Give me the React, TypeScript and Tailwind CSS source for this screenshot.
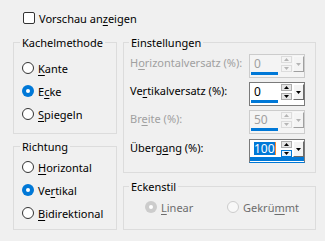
import React from "react";

const Up = ({ c }: { c: string }) => (
  <svg width="5" height="3" viewBox="0 0 5 3" className="block">
    <polygon points="0,3 5,3 2.5,0" fill={c} />
  </svg>
);
const Down = ({ c }: { c: string }) => (
  <svg width="5" height="3" viewBox="0 0 5 3" className="block">
    <polygon points="0,0 5,0 2.5,3" fill={c} />
  </svg>
);

function Radio({
  checked,
  disabled,
  children,
}: {
  checked?: boolean;
  disabled?: boolean;
  children: React.ReactNode;
}) {
  let circle;
  if (checked && !disabled) {
    circle = (
      <span className="w-[12px] h-[12px] rounded-full bg-[#0078d7] flex items-center justify-center shrink-0">
        <span className="w-[4px] h-[4px] rounded-full bg-white" />
      </span>
    );
  } else if (checked && disabled) {
    circle = (
      <span className="w-[12px] h-[12px] rounded-full bg-[#cccccc] flex items-center justify-center shrink-0">
        <span className="w-[4px] h-[4px] rounded-full bg-white" />
      </span>
    );
  } else if (disabled) {
    circle = (
      <span className="w-[12px] h-[12px] rounded-full border border-[#cccccc] bg-[#f8f8f8] shrink-0" />
    );
  } else {
    circle = (
      <span className="w-[12px] h-[12px] rounded-full border border-[#333333] bg-white shrink-0" />
    );
  }
  return (
    <div className="flex items-center h-[12px] gap-[4px]">
      {circle}
      <span
        className={
          disabled
            ? "text-[#6d6d6d] leading-[15px] whitespace-nowrap"
            : "text-black leading-[15px] whitespace-nowrap"
        }
      >
        {children}
      </span>
    </div>
  );
}

const U = ({ children }: { children: React.ReactNode }) => (
  <span className="underline underline-offset-[2px] decoration-[1px]">{children}</span>
);

function Spin({
  value,
  disabled,
  focused,
}: {
  value: string;
  disabled?: boolean;
  focused?: boolean;
}) {
  const arrow = disabled ? "#b5b5b5" : "#000000";
  return (
    <div
      className={
        disabled
          ? "w-[56px] h-[24px] border border-[#cccccc] bg-[#f4f4f4] flex flex-col shrink-0"
          : focused
          ? "w-[56px] h-[24px] border border-[#7a7a7a] border-b-[#0078d7] bg-white flex flex-col shrink-0"
          : "w-[56px] h-[24px] border border-[#7a7a7a] bg-white flex flex-col shrink-0"
      }
    >
      <div className="flex h-[17px]">
        <div className="w-[30px] pl-[4px] flex items-center text-[12px]">
          {focused ? (
            <span className="flex items-center h-[13px] mt-[-1px]">
              <span className="bg-[#0078d7] text-white leading-[13px] h-[13px]">{value}</span>
              <span className="w-[1px] h-[13px] bg-[#ff8728]" />
            </span>
          ) : (
            <span
              className={
                disabled ? "text-[#a0a0a0] leading-[15px]" : "text-black leading-[15px]"
              }
            >
              {value}
            </span>
          )}
        </div>
        <div className="w-[1px]" />
        <div className="w-[11px] flex flex-col pt-[1px] gap-[2px]">
          <div
            className={
              disabled
                ? "h-[7px] border border-[#dcdcdc] bg-[#f4f4f4] flex items-center justify-center"
                : "h-[7px] border border-[#adadad] bg-[#e5e5e5] flex items-center justify-center"
            }
          >
            <Up c={arrow} />
          </div>
          <div
            className={
              disabled
                ? "h-[7px] border border-[#dcdcdc] bg-[#f4f4f4] flex items-center justify-center"
                : focused
                ? "h-[7px] border border-[#0078d7] bg-[#e5f1fb] flex items-center justify-center"
                : "h-[7px] border border-[#adadad] bg-[#e5e5e5] flex items-center justify-center"
            }
          >
            <Down c={arrow} />
          </div>
        </div>
        <div className="w-[1px]" />
        <div
          className={
            disabled
              ? "w-[11px] mt-[1px] h-[16px] border border-[#f8f8f8] border-r-[#a0a0a0] border-b-[#a0a0a0] bg-[#f4f4f4] flex items-center justify-center"
              : "w-[11px] mt-[1px] h-[16px] border border-white border-r-[#696969] border-b-[#696969] bg-[#f4f4f4] flex items-center justify-center"
          }
        >
          <Down c={arrow} />
        </div>
      </div>
      {focused ? (
        <div className="h-[4px] bg-[#0078d7]" />
      ) : (
        <div className="ml-[1px] w-[27px] h-[3px] bg-[#0078d7]" />
      )}
    </div>
  );
}

function Row({
  label,
  disabled,
  mt,
  children,
}: {
  label: React.ReactNode;
  disabled?: boolean;
  mt: string;
  children: React.ReactNode;
}) {
  return (
    <div className={`flex justify-between items-start h-[24px] ${mt}`}>
      <span
        className={
          disabled
            ? "text-[#a0a0a0] leading-[15px] mt-[1px] whitespace-nowrap"
            : "text-black leading-[15px] mt-[1px] whitespace-nowrap"
        }
      >
        {label}
      </span>
      {children}
    </div>
  );
}

export default function App() {
  return (
    <div className="w-[325px] h-[241px] bg-[#f0f0f0] overflow-hidden text-[11px] text-black font-['Noto_Sans',sans-serif]">
      <div className="flex items-center gap-[4px] mt-[12px] ml-[23px] h-[12px]">
        <span className="w-[12px] h-[12px] rounded-[2px] border border-[#333333] bg-white shrink-0" />
        <span className="leading-[15px]">
          Vorschau an<U>z</U>eigen
        </span>
      </div>
      <div className="flex gap-[6px] ml-[13px] mt-[11px]">
        <div className="flex flex-col gap-[5px] w-[104px]">
          <fieldset className="border border-[#dcdcdc] h-[99px] p-0 m-0 min-w-0">
            <legend className="ml-[6px] px-[2px] leading-[15px]">Kachelmethode</legend>
            <div className="flex flex-col gap-[11px] pl-[8px] mt-[12px]">
              <Radio>
                <U>K</U>ante
              </Radio>
              <Radio checked>
                E<U>c</U>ke
              </Radio>
              <Radio>
                <U>S</U>piegeln
              </Radio>
            </div>
          </fieldset>
          <fieldset className="border border-[#dcdcdc] h-[91px] p-0 m-0 min-w-0">
            <legend className="ml-[6px] px-[2px] leading-[15px]">Richtung</legend>
            <div className="flex flex-col gap-[11px] pl-[8px] mt-[7px]">
              <Radio>
                <U>H</U>orizontal
              </Radio>
              <Radio checked>
                Ve<U>r</U>tikal
              </Radio>
              <Radio>
                <U>B</U>idirektional
              </Radio>
            </div>
          </fieldset>
        </div>
        <div className="flex flex-col gap-[6px] w-[193px]">
          <fieldset className="border border-[#dcdcdc] h-[138px] p-0 m-0 min-w-0">
            <legend className="ml-[5px] px-[2px] leading-[15px]">Einstellungen</legend>
            <div className="flex flex-col pl-[6px] pr-[10px]">
              <Row
                mt="mt-[4px]"
                disabled
                label={
                  <>
                    H<U>o</U>rizontalversatz (%):
                  </>
                }
              >
                <Spin value="0" disabled />
              </Row>
              <Row
                mt="mt-[4px]"
                label={
                  <>
                    Ve<U>r</U>tikalversatz (%):
                  </>
                }
              >
                <Spin value="0" />
              </Row>
              <Row
                mt="mt-[4px]"
                disabled
                label={
                  <>
                    Br<U>e</U>ite (%):
                  </>
                }
              >
                <Spin value="50" disabled />
              </Row>
              <Row
                mt="mt-[5px]"
                label={
                  <>
                    Überg<U>a</U>ng (%):
                  </>
                }
              >
                <Spin value="100" focused />
              </Row>
            </div>
          </fieldset>
          <fieldset className="border border-[#dcdcdc] h-[51px] p-0 m-0 min-w-0">
            <legend className="ml-[5px] px-[2px] leading-[15px]">Eckenstil</legend>
            <div className="flex mt-[7px] pl-[21px]">
              <div className="w-[82px]">
                <Radio checked disabled>
                  <U>L</U>inear
                </Radio>
              </div>
              <Radio disabled>
                Gekrü<U>m</U>mt
              </Radio>
            </div>
          </fieldset>
        </div>
      </div>
    </div>
  );
}
